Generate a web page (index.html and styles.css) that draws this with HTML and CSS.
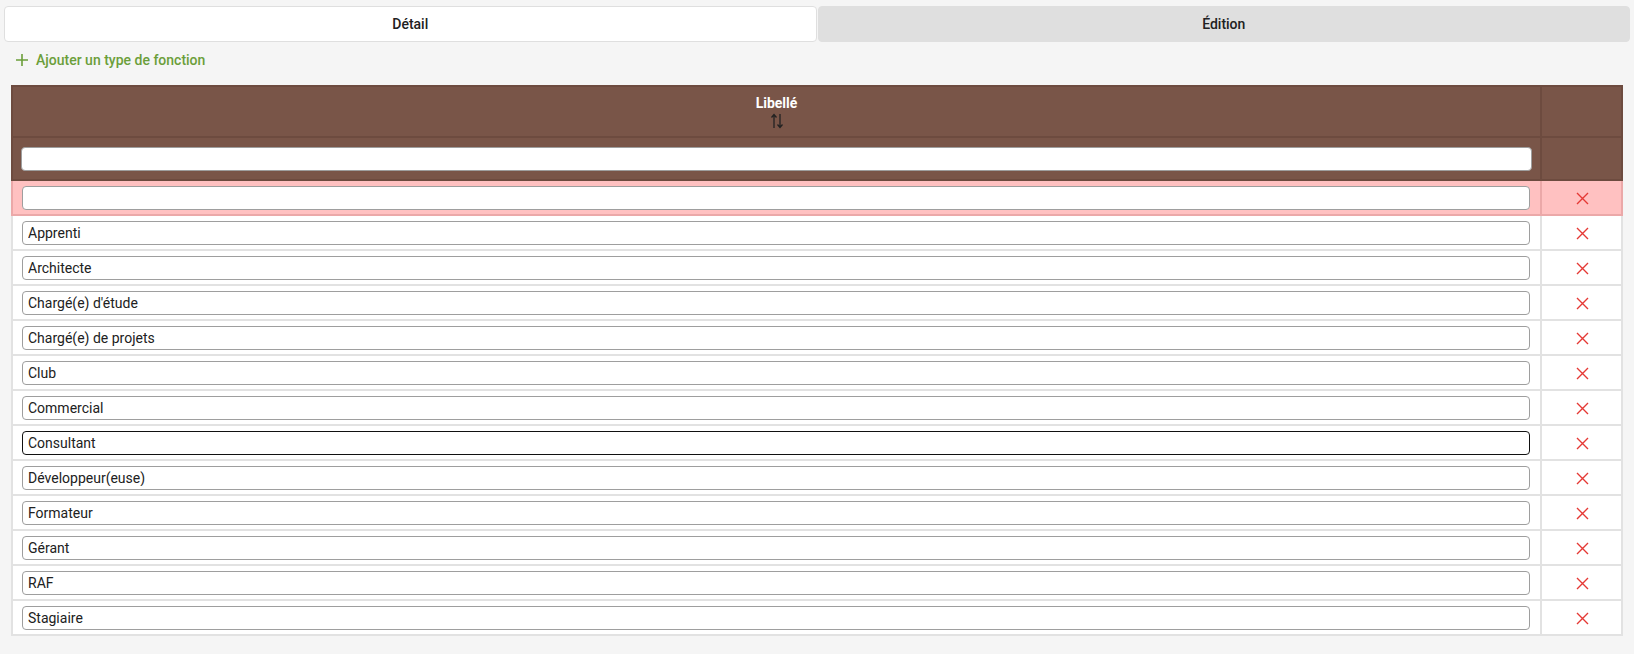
FILE: index.html
```html
<!DOCTYPE html>
<html lang="fr">

<head>
    <meta charset="UTF-8">
    <meta name="viewport" content="width=device-width, initial-scale=1.0">
    <title>Types de fonction</title>
    <link rel="stylesheet" href="styles.css">
</head>

<body>
    <div class="page">
        <div class="tabs">
            <button class="tab active">Détail</button>
            <button class="tab">Édition</button>
        </div>

        <a href="#" class="add-link" onclick="addRow(); return false;">
            <svg width="14" height="14" viewBox="0 0 14 14"><path d="M7 1v12M1 7h12" stroke="currentColor" stroke-width="1.6" fill="none"/></svg>
            Ajouter un type de fonction
        </a>

        <table class="grid">
            <thead>
                <tr class="head-row">
                    <th class="label-col">
                        <div class="th-title">Libellé</div>
                        <svg class="sort-icon" width="14" height="16" viewBox="0 0 14 16">
                            <path d="M4 15V2M1.5 4.5L4 1.5l2.5 3" stroke="#222" stroke-width="1.3" fill="none"/>
                            <path d="M10 1v13M7.5 11.5L10 14.5l2.5-3" stroke="#222" stroke-width="1.3" fill="none"/>
                        </svg>
                    </th>
                    <th class="action-col"></th>
                </tr>
                <tr class="filter-row">
                    <th><input type="text" class="field"></th>
                    <th></th>
                </tr>
            </thead>
            <tbody id="rows"></tbody>
        </table>
    </div>

    <script>
        const labels = [
            "", "Apprenti", "Architecte", "Chargé(e) d'étude", "Chargé(e) de projets", "Club",
            "Commercial", "Consultant", "Développeur(euse)", "Formateur", "Gérant", "RAF", "Stagiaire"
        ];

        const closeIcon = '<svg width="13" height="13" viewBox="0 0 13 13"><path d="M1 1l11 11M12 1L1 12" stroke="#e53935" stroke-width="1.4" fill="none"/></svg>';

        function displayRows() {
            const body = document.getElementById("rows");
            body.innerHTML = "";
            labels.forEach((label, index) => {
                const row = document.createElement("tr");
                if (label === "") row.classList.add("new-row");
                if (label === "Consultant") row.classList.add("focused");
                row.innerHTML = `
                    <td><input type="text" class="field" value="${label}"></td>
                    <td class="action-cell"><button class="delete-btn" onclick="deleteRow(${index})">${closeIcon}</button></td>
                `;
                body.appendChild(row);
            });
        }

        function addRow() {
            labels.unshift("");
            displayRows();
        }

        function deleteRow(index) {
            labels.splice(index, 1);
            displayRows();
        }

        displayRows();
    </script>
</body>

</html>
```

FILE: styles.css
```css
* {
    margin: 0;
    padding: 0;
    box-sizing: border-box;
    font-family: Roboto, 'Liberation Sans', sans-serif;
}

body {
    background: #f5f5f5;
    color: #212121;
}

.page {
    padding: 6px 4px;
}

.tabs {
    display: flex;
    gap: 1px;
}

.tab {
    flex: 1;
    height: 36px;
    border: 1px solid #dfdfdf;
    border-radius: 4px;
    background: #dfdfdf;
    color: #212121;
    font-size: 14px;
    font-weight: 500;
    cursor: pointer;
}

.tab.active {
    background: #fff;
}

.add-link {
    display: inline-flex;
    align-items: center;
    gap: 7px;
    height: 24px;
    margin: 6px 0 0 11px;
    color: #6b9e3a;
    font-size: 14px;
    font-weight: 500;
    text-decoration: none;
}

.grid {
    width: calc(100% - 14px);
    margin: 13px 7px 0;
    border-collapse: collapse;
    background: #fff;
}

.grid td {
    border: 2px solid #e2e2e2;
    height: 35px;
    padding: 0 10px 0 9px;
}

.grid thead th {
    background: #795548;
    border: 2px solid #6d4b3f;
}

.head-row th {
    height: 51px;
    padding-top: 8px;
    vertical-align: top;
}

.th-title {
    color: #fff;
    font-size: 14px;
    font-weight: 700;
    line-height: 16px;
}

.sort-icon {
    display: block;
    margin: 2px auto 0;
}

.action-col {
    width: 81px;
}

.filter-row th {
    height: 43px;
    padding: 0 8px;
}

.field {
    display: block;
    width: 100%;
    height: 24px;
    padding: 0 5px;
    border: 1px solid #9e9e9e;
    border-radius: 4px;
    background: #fff;
    color: #212121;
    font-size: 14px;
    outline: none;
}

.focused .field {
    border-color: #111;
}

.new-row td {
    background: #ffc1c1;
    border-color: #eba8a8;
}

.grid .action-cell {
    padding: 2px 0 0 2px;
}

.delete-btn {
    display: block;
    margin: 0 auto;
    border: none;
    background: none;
    cursor: pointer;
    line-height: 0;
}
```
